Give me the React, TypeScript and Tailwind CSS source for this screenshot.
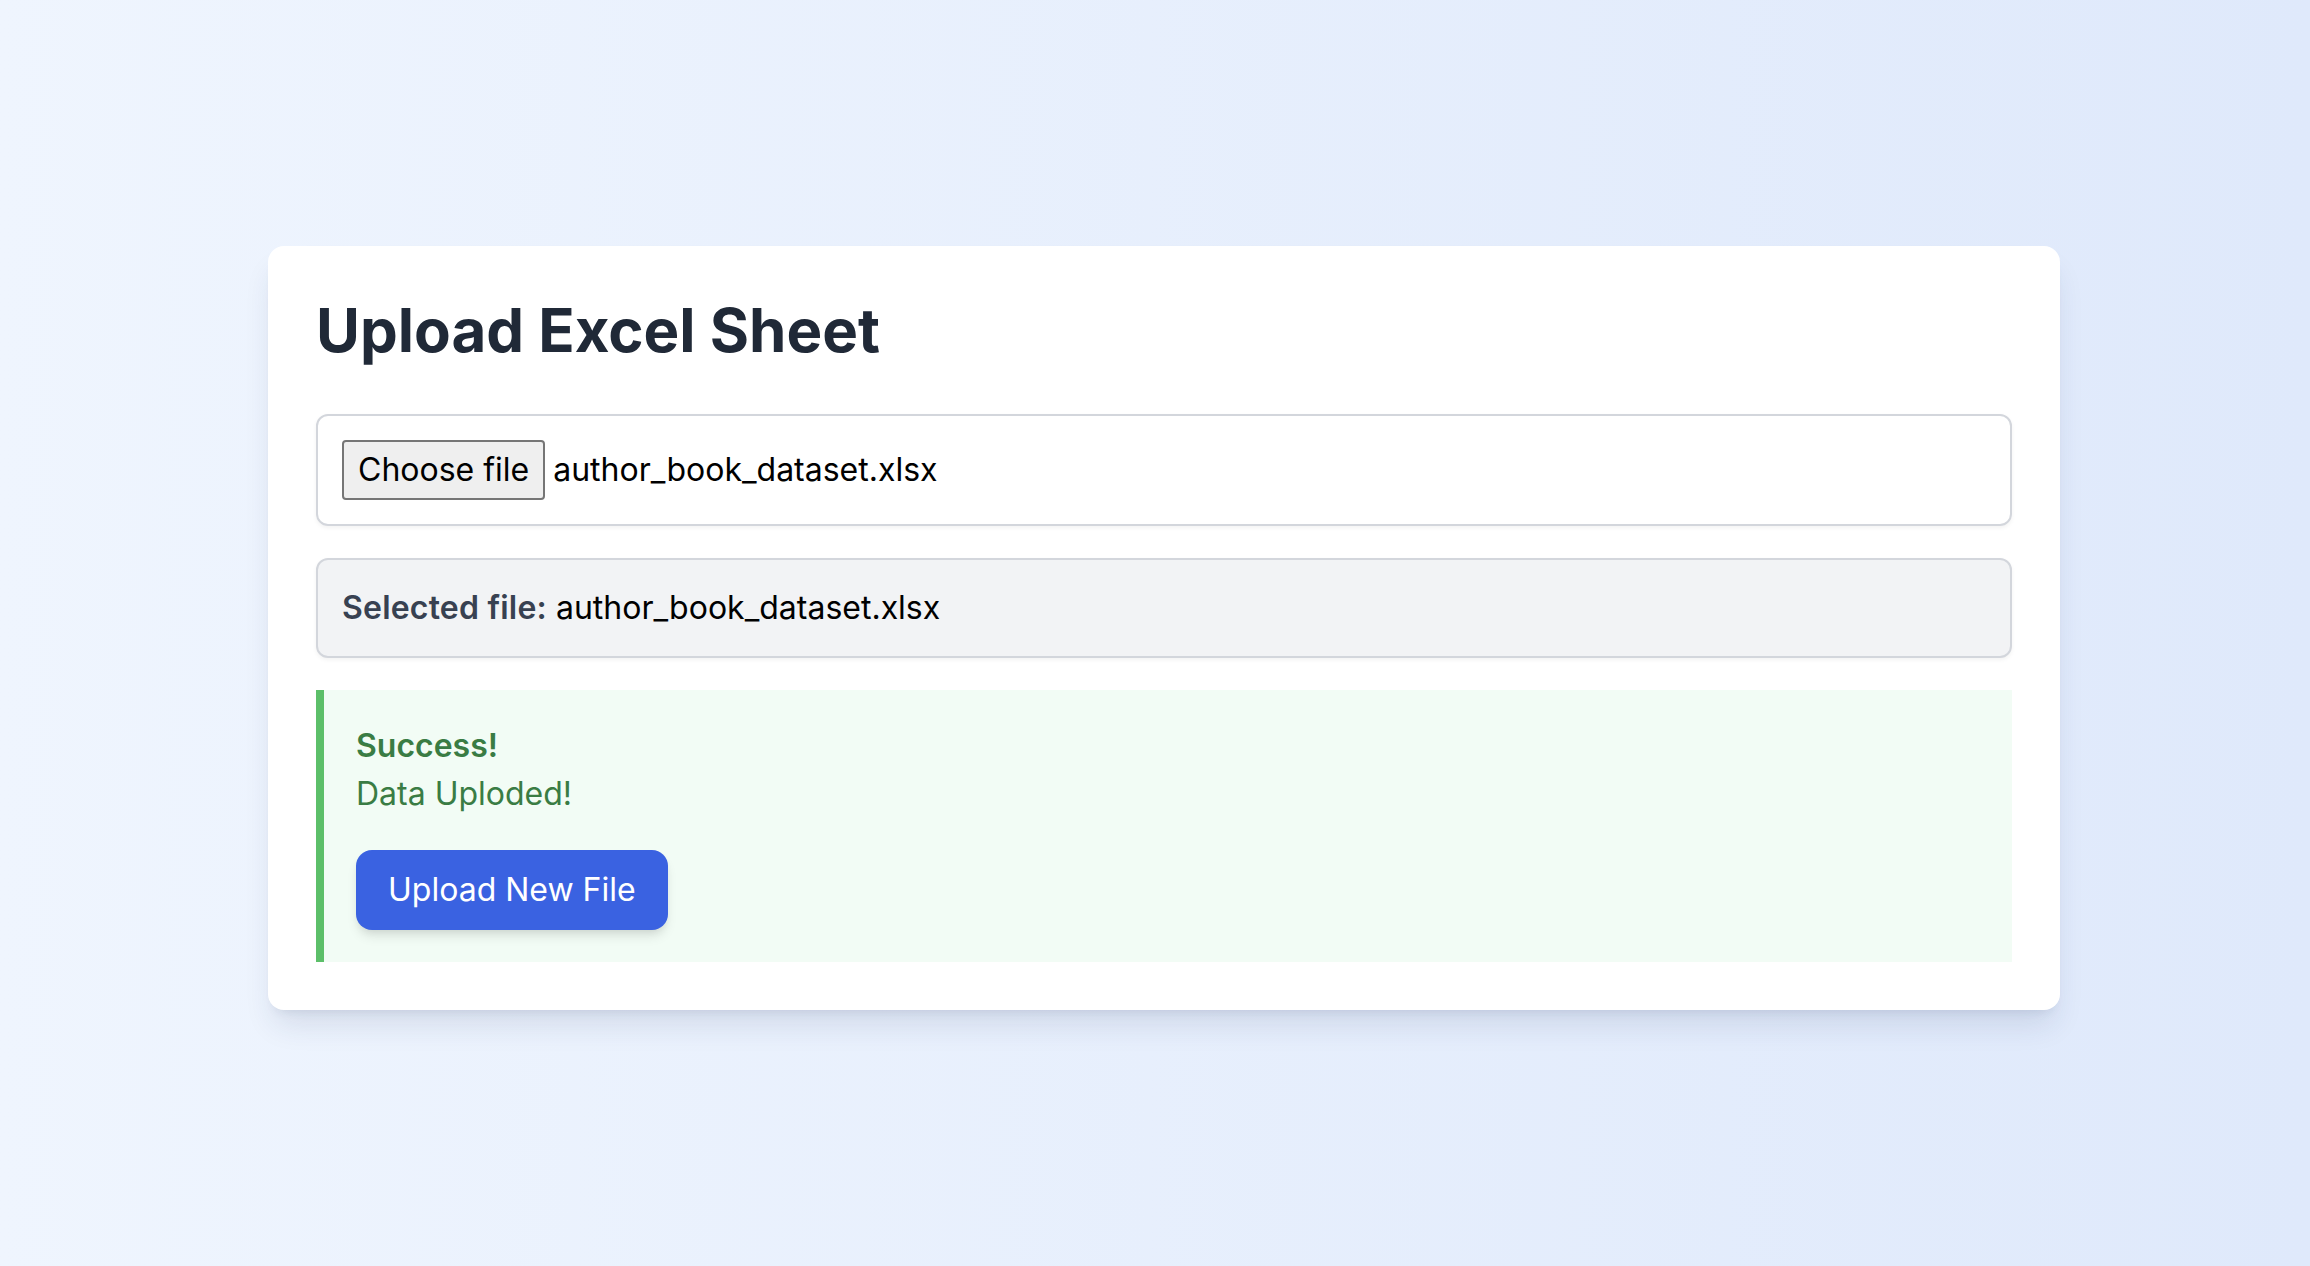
export default function App() {
  const fileName = "author_book_dataset.xlsx";

  return (
    <div className="min-h-screen flex items-center justify-center pl-[18px] pb-[10px] bg-linear-to-r from-[#eff5fe] to-[#dfe9fb] font-['Inter',sans-serif]">
      <div className="w-[1792px] bg-white rounded-2xl p-12 shadow-[0_20px_30px_-6px_rgba(30,50,90,0.12),0_8px_12px_-8px_rgba(30,50,90,0.12)]">
        <h1 className="text-[60px] leading-[72px] font-bold text-[#202937] mb-12">
          Upload Excel Sheet
        </h1>

        {/* fake file input, the real one can't show a chosen name */}
        <div className="flex items-center p-6 border-2 border-[#d3d6dc] rounded-xl shadow-[0_2px_4px_0_rgba(0,0,0,0.05)] text-[32px] leading-[48px] text-black">
          <span className="px-[14px] py-1 bg-[#efefef] border-2 border-[#767676] rounded-[4px]">
            Choose file
          </span>
          <span className="ml-2">{fileName}</span>
        </div>

        <div className="mt-8 p-6 bg-[#f2f3f5] border-2 border-[#d3d6dc] rounded-xl shadow-[0_2px_4px_0_rgba(0,0,0,0.05)] text-[32px] leading-[48px] text-black">
          <span className="font-semibold text-[#384151] tracking-[0.2px]">Selected file:</span> {fileName}
        </div>

        <div className="mt-8 p-8 bg-[#f2fcf5] border-l-8 border-[#5cbf69] text-[#3a7c44] text-[32px] leading-[48px]">
          <p className="font-semibold">Success!</p>
          <p>Data Uploded!</p>
          <button className="mt-8 px-8 py-4 bg-[#3a62e1] text-white rounded-2xl shadow-[0_8px_12px_-2px_rgba(0,0,0,0.1),0_4px_8px_-4px_rgba(0,0,0,0.1)]">
            Upload New File
          </button>
        </div>
      </div>
    </div>
  );
}
